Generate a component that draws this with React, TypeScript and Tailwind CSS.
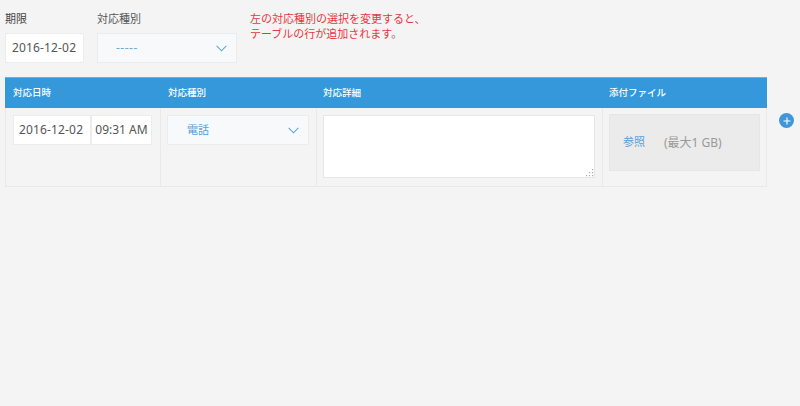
const font = { fontFamily: '"Noto Sans", "Noto Sans CJK JP", sans-serif' };

function Chevron({ className }: { className: string }) {
  return (
    <svg viewBox="0 0 12 7" className={className} fill="none" stroke="#5b9fd8" strokeWidth="1.1">
      <path d="M0.7 0.7 L6 6 L11.3 0.7" />
    </svg>
  );
}

export default function App() {
  return (
    <div className="w-[800px] h-[406px] bg-[#f4f4f4] overflow-hidden text-[#555] text-[11px] pl-[5px] pt-[11px]" style={font}>
      <div className="flex h-[66px]">
        <div className="w-[92px] flex flex-col">
          <div className="h-[23px] leading-[15px] text-[#444]">期限</div>
          <div className="w-[79px] h-[30px] -mt-px bg-white border border-[#ececec] flex items-center pl-[6px] text-[12px] tracking-[0.15px] text-[#555]">2016-12-02</div>
        </div>
        <div className="w-[153px] flex flex-col">
          <div className="h-[23px] leading-[15px] text-[#555]">対応種別</div>
          <div className="w-[140px] h-[30px] -mt-px bg-[#f7f9fb] border border-[#ececec] flex items-center justify-between pl-[18px] pr-[9px] text-[#6aa9dc]">
            <span className="text-[12px] tracking-[0.5px]">-----</span>
            <Chevron className="w-[11px] h-[7px]" />
          </div>
        </div>
        <div className="leading-[15px] text-[#e8363c] text-[11px]">
          <div>左の対応種別の選択を変更すると、</div>
          <div>テーブルの行が追加されます。</div>
        </div>
      </div>

      <div className="flex items-start">
        <div className="w-[762px]">
          <div className="h-[31px] bg-[#3498db] border-t border-[#63b3ea] grid grid-cols-[155px_155px_286px_166px] text-white text-[9.5px] font-medium items-center">
            <div className="pl-[8px]">対応日時</div>
            <div className="pl-[8px]">対応種別</div>
            <div className="pl-[8px]">対応詳細</div>
            <div className="pl-[8px]">添付ファイル</div>
          </div>
          <div className="h-[79px] border-b border-x border-[#e9e9e9] grid grid-cols-[155px_156px_286px_1fr]">
            <div className="border-r border-[#e9e9e9] pt-[7px] pl-[7px] flex items-start">
              <div className="w-[78px] h-[30px] bg-white border border-[#ececec] flex items-center pl-[5px] text-[12px] tracking-[0.15px]">2016-12-02</div>
              <div className="w-[61px] h-[30px] bg-white border border-[#ececec] flex items-center justify-center text-[12px]">09:31 AM</div>
            </div>
            <div className="border-r border-[#e9e9e9] pt-[7px] pl-[6px]">
              <div className="w-[142px] h-[30px] bg-[#f7f9fb] border border-[#ececec] flex items-center justify-between pl-[19px] pr-[9px] text-[#5b9fd8]">
                <span>電話</span>
                <Chevron className="w-[11px] h-[7px]" />
              </div>
            </div>
            <div className="border-r border-[#e9e9e9] pt-[7px] pl-[6px]">
              <div className="relative w-[272px] h-[63px] bg-white border border-[#e6e6e6]">
                <svg viewBox="0 0 8 8" className="absolute right-0 bottom-0 w-[8px] h-[8px]" fill="#aaa">
                  <rect x="6" y="0" width="1.2" height="1.2" />
                  <rect x="3" y="3" width="1.2" height="1.2" />
                  <rect x="6" y="3" width="1.2" height="1.2" />
                  <rect x="0" y="6" width="1.2" height="1.2" />
                  <rect x="3" y="6" width="1.2" height="1.2" />
                  <rect x="6" y="6" width="1.2" height="1.2" />
                </svg>
              </div>
            </div>
            <div className="pt-[6px] pl-[6px]">
              <div className="w-[151px] h-[57px] bg-[#ebebeb] border border-[#e6e6e6] flex items-center pl-[13px]">
                <span className="text-[#5b9fd8]">参照</span>
                <span className="ml-[19px] text-[#999] text-[12px]">(最大1 GB)</span>
              </div>
            </div>
          </div>
        </div>
        <div className="ml-[12px] mt-[36px] w-[15px] h-[15px] rounded-full bg-[#3f96da] flex items-center justify-center">
          <svg viewBox="0 0 8 8" className="w-[8px] h-[8px]" stroke="white" strokeWidth="1.1">
            <path d="M4 0.5 V7.5 M0.5 4 H7.5" />
          </svg>
        </div>
      </div>
    </div>
  );
}
